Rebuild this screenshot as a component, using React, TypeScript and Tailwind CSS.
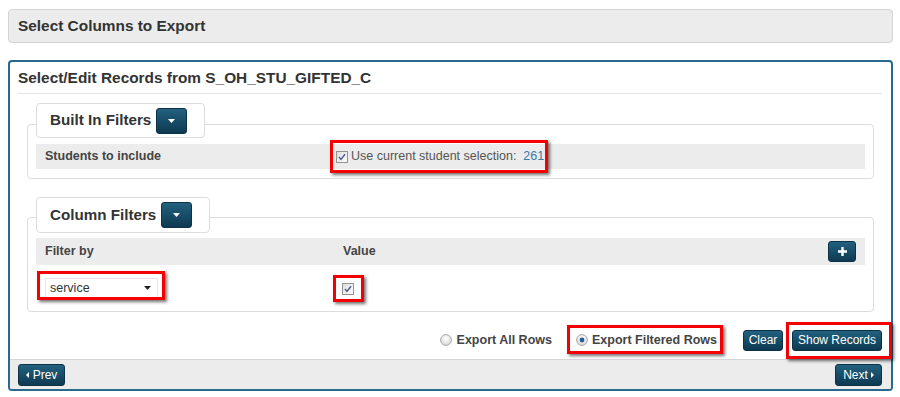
import React from "react";

// Red annotation frame drawn over a highlighted control
const RedBox: React.FC<{ className: string }> = ({ className }) => (
  <span
    className={`pointer-events-none absolute border-[3px] border-[#f40000] shadow-[2px_2px_3px_rgba(0,0,0,0.55)] ${className}`}
  />
);

const Caret = () => (
  <svg width="7" height="4" viewBox="0 0 7 4">
    <path d="M0 0h7L3.5 4z" fill="#fff" />
  </svg>
);

const DarkButton: React.FC<{ className?: string; children: React.ReactNode }> = ({
  className = "",
  children,
}) => (
  <button
    className={`flex items-center justify-center rounded-[3px] border border-[#0b3246] bg-gradient-to-b from-[#22617f] to-[#0e3a51] text-[12px] leading-none text-white ${className}`}
  >
    {children}
  </button>
);

const Checkbox = () => (
  <svg width="12" height="12" viewBox="0 0 12 12" className="shrink-0">
    <defs>
      <linearGradient id="cbg" x1="0" y1="0" x2="1" y2="1">
        <stop offset="0" stopColor="#dcdcdc" />
        <stop offset="1" stopColor="#ffffff" />
      </linearGradient>
    </defs>
    <rect x="0.5" y="0.5" width="11" height="11" fill="url(#cbg)" stroke="#939393" />
    <path d="M3 6l2 2.4L9 3.3" fill="none" stroke="#4b5a96" strokeWidth="1.4" />
  </svg>
);

const Radio: React.FC<{ checked?: boolean }> = ({ checked }) => (
  <svg width="12" height="12" viewBox="0 0 12 12" className="shrink-0">
    <defs>
      <radialGradient id="rg" cx="0.5" cy="0.35" r="0.7">
        <stop offset="0" stopColor="#ffffff" />
        <stop offset="1" stopColor="#d4d4d4" />
      </radialGradient>
    </defs>
    <circle cx="6" cy="6" r="5.4" fill="url(#rg)" stroke="#a8a8a8" />
    {checked && <circle cx="6" cy="6" r="2.4" fill="#235f94" />}
  </svg>
);

const Legend: React.FC<{ title: string; className: string }> = ({ title, className }) => (
  <div
    className={`relative z-10 ml-[9px] flex w-fit items-center gap-[5px] rounded-[4px] border border-[#dcdcdc] bg-white pl-[13px] pr-[17px] ${className}`}
  >
    <span className="text-[15.2px] font-bold text-[#333]">{title}</span>
    <DarkButton className="h-[26px] w-[31px]">
      <Caret />
    </DarkButton>
  </div>
);

export default function App() {
  return (
    <div className="h-[397px] w-[900px] bg-white pl-[8px] pr-[7px] pt-[9px] font-['Liberation_Sans',Arial,sans-serif] text-[#333]">
      {/* Page heading bar */}
      <div className="flex h-[34px] items-center rounded-[4px] border border-[#d4d4d4] bg-[#ececec] px-[9px]">
        <span className="text-[15.4px] font-bold text-[#333]">Select Columns to Export</span>
      </div>

      {/* Main panel */}
      <div className="mt-[17px] flex h-[331px] flex-col rounded-[4px] border-2 border-[#286a8c]">
        <div className="ml-[8px] mr-[9px] flex h-[32px] items-center border-b border-[#e4e4e4]">
          <span className="text-[15.4px] font-bold text-[#333]">
            Select/Edit Records from S_OH_STU_GIFTED_C
          </span>
        </div>

        {/* Built In Filters */}
        <div className="mx-[17px] mt-[9px]">
          <Legend title="Built In Filters" className="h-[35px]" />
          <div className="-mt-[14px] rounded-[4px] border border-[#dcdcdc] px-[8px] pb-[9px] pt-[19px]">
            <div className="flex h-[25px] items-center bg-[#ececec] px-[9px] text-[12.5px]">
              <span className="w-[291px] font-bold text-[#444]">Students to include</span>
              <span className="relative inline-flex items-center gap-[3px]">
                <Checkbox />
                <span className="text-[#555]">
                  {"Use current student selection:\u00a0\u00a0"}
                  <span className="text-[#3a7aa6]">261</span>
                </span>
                <RedBox className="-bottom-[7px] -left-[6px] -right-[4px] -top-[7px]" />
              </span>
            </div>
          </div>
        </div>

        {/* Column Filters */}
        <div className="mx-[17px] mt-[18px]">
          <Legend title="Column Filters" className="h-[36px]" />
          <div className="-mt-[16px] rounded-[4px] border border-[#dcdcdc] px-[8px] pt-[20px]">
            <div className="flex h-[27px] items-center bg-[#ececec] pl-[9px] pr-[9px] text-[12.5px] font-bold text-[#444]">
              <span className="w-[298px]">Filter by</span>
              <span className="flex-1">Value</span>
              <DarkButton className="h-[21px] w-[28px]">
                <svg width="9" height="9" viewBox="0 0 9 9">
                  <path d="M3.3 0h2.4v3.3H9v2.4H5.7V9H3.3V5.7H0V3.3h3.3z" fill="#fff" />
                </svg>
              </DarkButton>
            </div>
            <div className="flex h-[46px] items-center px-[9px]">
              <div className="w-[298px]">
                <span className="relative flex h-[20px] w-[113px] items-center justify-between border border-[#e6e6e6] bg-white pl-[4px] pr-[6px] text-[12.5px] text-[#333]">
                  service
                  <svg width="7" height="4" viewBox="0 0 7 4">
                    <path d="M0 0h7L3.5 4z" fill="#222" />
                  </svg>
                  <RedBox className="-bottom-[3px] -left-[9px] -right-[8px] -top-[8px]" />
                </span>
              </div>
              <span className="relative -ml-[1px] mt-[2px] flex">
                <Checkbox />
                <RedBox className="-bottom-[7px] -left-[9px] -right-[10px] -top-[8px]" />
              </span>
            </div>
          </div>
        </div>

        {/* Export options */}
        <div className="flex h-[47px] items-center justify-end pr-[9px] pt-[9px] text-[12.5px] font-bold text-[#444]">
          <label className="flex items-center gap-[5px]">
            <Radio />
            Export All Rows
          </label>
          <label className="relative ml-[24px] flex items-center gap-[4px]">
            <Radio checked />
            Export Filtered Rows
            <RedBox className="-bottom-[5px] -left-[9px] -right-[6px] -top-[6px]" />
          </label>
          <DarkButton className="ml-[26px] h-[21px] w-[40px] font-normal">Clear</DarkButton>
          <span className="relative ml-[9px] flex">
            <DarkButton className="h-[21px] w-[90px] font-normal">Show Records</DarkButton>
            <RedBox className="-bottom-[8px] -left-[6px] -right-[10px] -top-[8px]" />
          </span>
        </div>

        {/* Footer navigation */}
        <div className="flex flex-1 items-center justify-between rounded-b-[2px] border-t border-[#d6d6d6] bg-[#ececec] pl-[8px] pr-[9px]">
          <DarkButton className="h-[22px] w-[47px] gap-[4px]">
            <svg width="3" height="6" viewBox="0 0 3 6">
              <path d="M3 0v6L0 3z" fill="#fff" />
            </svg>
            Prev
          </DarkButton>
          <DarkButton className="h-[22px] w-[47px] gap-[3px]">
            Next
            <svg width="3" height="6" viewBox="0 0 3 6">
              <path d="M0 0v6l3-3z" fill="#fff" />
            </svg>
          </DarkButton>
        </div>
      </div>
    </div>
  );
}
